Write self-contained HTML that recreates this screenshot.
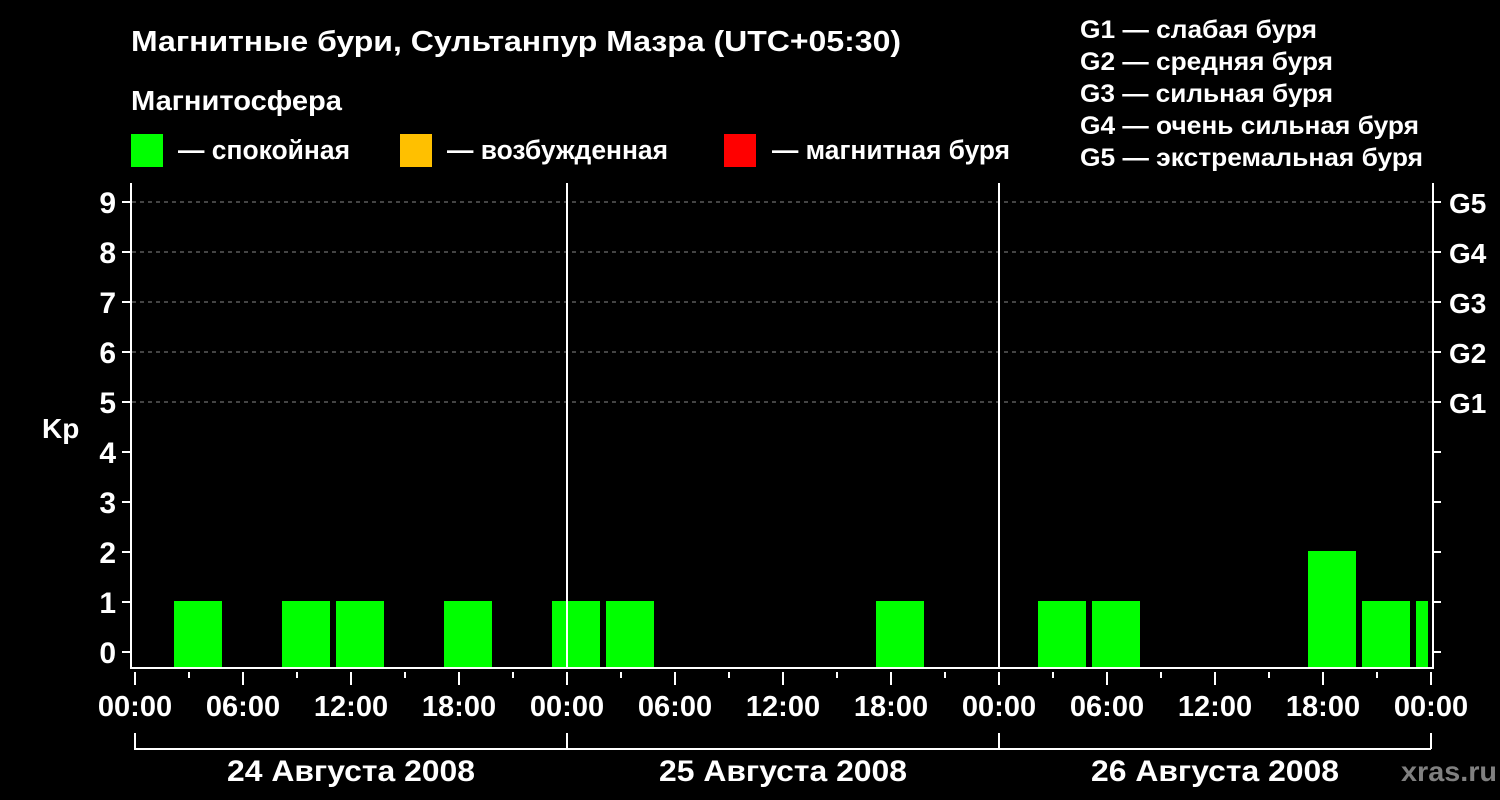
<!DOCTYPE html>
<html><head><meta charset="utf-8"><style>
html,body{margin:0;padding:0;background:#000;}
svg{display:block;}
text{font-family:"Liberation Sans",Arial,sans-serif;font-weight:bold;fill:#fff;}
</style></head><body>
<svg width="1500" height="800" viewBox="0 0 1500 800" xmlns="http://www.w3.org/2000/svg">
<rect width="1500" height="800" fill="#000"/>
<text x="131" y="51" font-size="29" textLength="770" lengthAdjust="spacingAndGlyphs">Магнитные бури, Сультанпур Мазра (UTC+05:30)</text>
<text x="131" y="110" font-size="28" textLength="211" lengthAdjust="spacingAndGlyphs">Магнитосфера</text>
<rect x="131" y="134" width="32" height="33" fill="#00ff00"/>
<text x="178" y="159" font-size="27" textLength="172" lengthAdjust="spacingAndGlyphs">— спокойная</text>
<rect x="400" y="134" width="32" height="33" fill="#ffc000"/>
<text x="447" y="159" font-size="27" textLength="221" lengthAdjust="spacingAndGlyphs">— возбужденная</text>
<rect x="724" y="134" width="32" height="33" fill="#ff0000"/>
<text x="772" y="159" font-size="27" textLength="238" lengthAdjust="spacingAndGlyphs">— магнитная буря</text>
<g font-size="25">
<text x="1080" y="38" textLength="237" lengthAdjust="spacingAndGlyphs">G1 — слабая буря</text>
<text x="1080" y="70" textLength="253" lengthAdjust="spacingAndGlyphs">G2 — средняя буря</text>
<text x="1080" y="102" textLength="253" lengthAdjust="spacingAndGlyphs">G3 — сильная буря</text>
<text x="1080" y="134" textLength="339" lengthAdjust="spacingAndGlyphs">G4 — очень сильная буря</text>
<text x="1080" y="166" textLength="343" lengthAdjust="spacingAndGlyphs">G5 — экстремальная буря</text>
</g>
<g stroke="#888" stroke-width="1" stroke-dasharray="4,4">
<line x1="132" y1="202" x2="1432" y2="202"/>
<line x1="132" y1="252" x2="1432" y2="252"/>
<line x1="132" y1="302" x2="1432" y2="302"/>
<line x1="132" y1="352" x2="1432" y2="352"/>
<line x1="132" y1="402" x2="1432" y2="402"/>
</g>
<g fill="#00ff00">
<rect x="174" y="601" width="48" height="67"/>
<rect x="282" y="601" width="48" height="67"/>
<rect x="336" y="601" width="48" height="67"/>
<rect x="444" y="601" width="48" height="67"/>
<rect x="552" y="601" width="48" height="67"/>
<rect x="606" y="601" width="48" height="67"/>
<rect x="876" y="601" width="48" height="67"/>
<rect x="1038" y="601" width="48" height="67"/>
<rect x="1092" y="601" width="48" height="67"/>
<rect x="1308" y="551" width="48" height="117"/>
<rect x="1362" y="601" width="48" height="67"/>
<rect x="1416" y="601" width="12" height="67"/>
</g>
<g stroke="#fff" stroke-width="2" fill="none">
<line x1="131" y1="183" x2="131" y2="668"/>
<line x1="1433" y1="183" x2="1433" y2="668"/>
<line x1="130" y1="668" x2="1434" y2="668"/>
<line x1="567" y1="183" x2="567" y2="668"/>
<line x1="999" y1="183" x2="999" y2="668"/>
<path d="M122 202H131M122 252H131M122 302H131M122 352H131M122 402H131M122 452H131M122 502H131M122 552H131M122 602H131M122 652H131"/>
<path d="M1433 202H1441M1433 252H1441M1433 302H1441M1433 352H1441M1433 402H1441M1433 452H1441M1433 502H1441M1433 552H1441M1433 602H1441M1433 652H1441"/>
<path d="M135 672V685M243 672V685M351 672V685M459 672V685M567 672V685M675 672V685M783 672V685M891 672V685M999 672V685M1107 672V685M1215 672V685M1323 672V685M1431 672V685"/>
<path d="M189 672V678M297 672V678M405 672V678M513 672V678M621 672V678M729 672V678M837 672V678M945 672V678M1053 672V678M1161 672V678M1269 672V678M1377 672V678"/>
<path d="M135 733V749H1431M1431 733V749M567 733V749M999 733V749"/>
</g>
<g font-size="30" text-anchor="end">
<text x="116" y="213">9</text><text x="116" y="263">8</text><text x="116" y="313">7</text><text x="116" y="363">6</text><text x="116" y="413">5</text><text x="116" y="463">4</text><text x="116" y="513">3</text><text x="116" y="563">2</text><text x="116" y="613">1</text><text x="116" y="663">0</text>
</g>
<text x="42" y="438" font-size="28">Kp</text>
<g font-size="28">
<text x="1449" y="213">G5</text><text x="1449" y="263">G4</text><text x="1449" y="313">G3</text><text x="1449" y="363">G2</text><text x="1449" y="413">G1</text>
</g>
<g font-size="29" text-anchor="middle">
<text x="135" y="716">00:00</text><text x="243" y="716">06:00</text><text x="351" y="716">12:00</text><text x="459" y="716">18:00</text>
<text x="567" y="716">00:00</text><text x="675" y="716">06:00</text><text x="783" y="716">12:00</text><text x="891" y="716">18:00</text>
<text x="999" y="716">00:00</text><text x="1107" y="716">06:00</text><text x="1215" y="716">12:00</text><text x="1323" y="716">18:00</text>
<text x="1431" y="716">00:00</text>
<text x="351" y="781" font-size="30" textLength="248" lengthAdjust="spacingAndGlyphs">24 Августа 2008</text>
<text x="783" y="781" font-size="30" textLength="248" lengthAdjust="spacingAndGlyphs">25 Августа 2008</text>
<text x="1215" y="781" font-size="30" textLength="248" lengthAdjust="spacingAndGlyphs">26 Августа 2008</text>
</g>
<text x="1401" y="781" font-size="28" style="fill:#808080" textLength="96" lengthAdjust="spacingAndGlyphs">xras.ru</text>
</svg>
</body></html>
